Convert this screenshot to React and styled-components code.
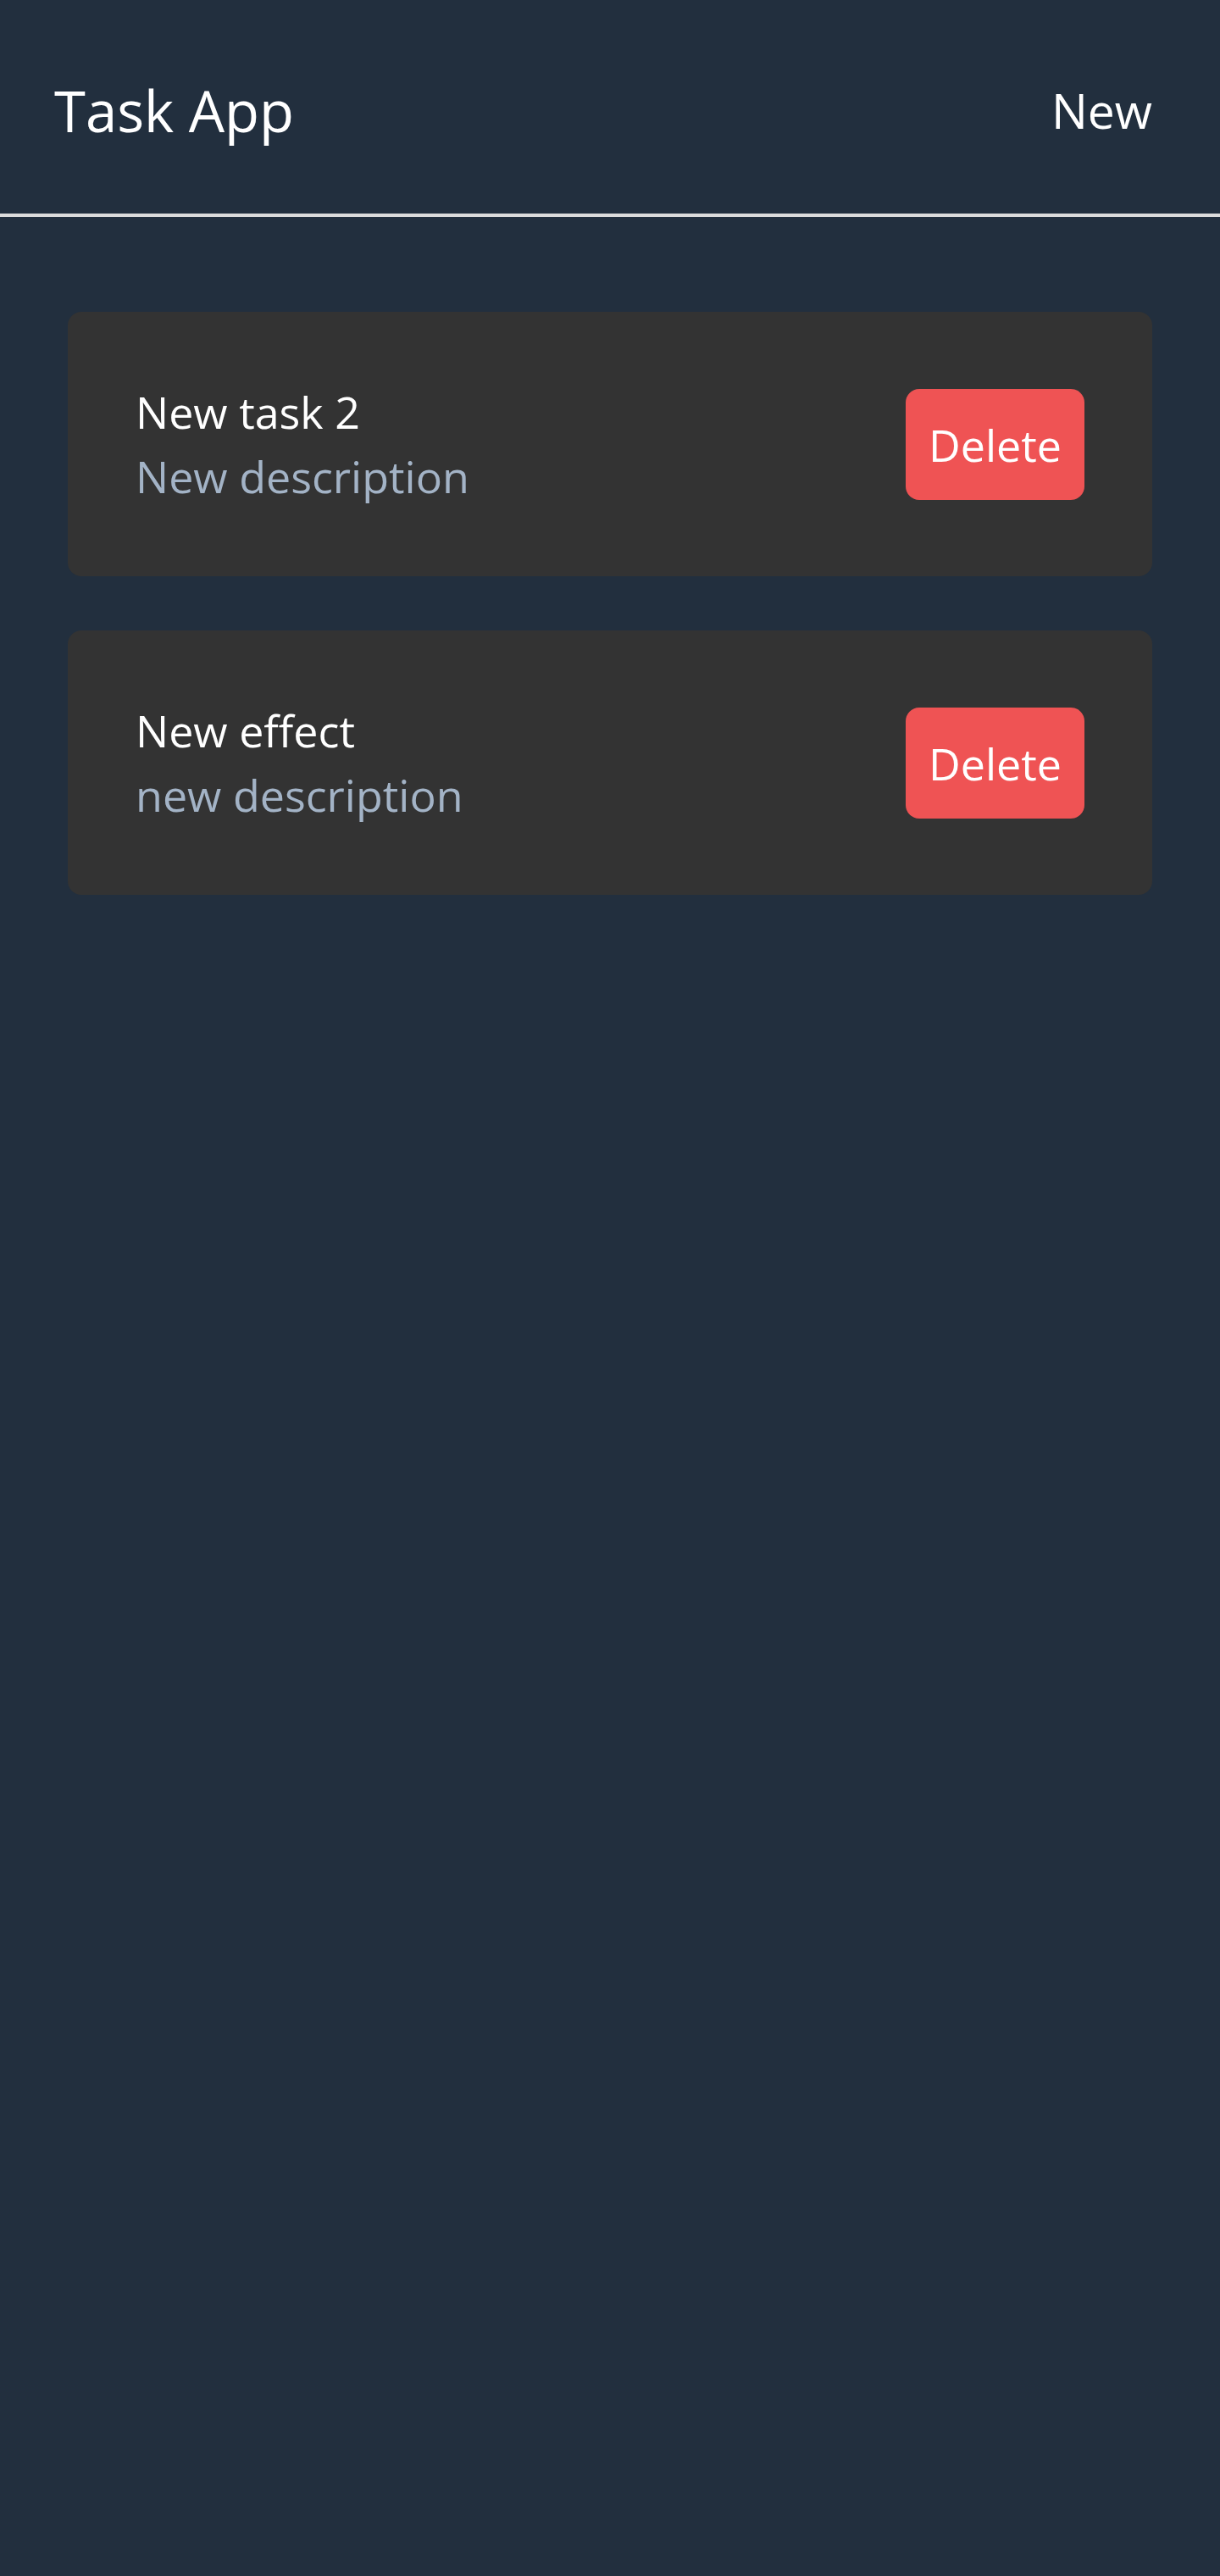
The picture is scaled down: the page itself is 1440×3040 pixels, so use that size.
import React from 'react';
import { useState } from 'react';
import styled, { createGlobalStyle } from 'styled-components';

//estilos globales de la pagina
const GlobalStyle = createGlobalStyle`
  body {
    margin: 0;
    background-color: #222f3e;
    font-family: "Open Sans", "Noto Sans", "DejaVu Sans", sans-serif;
    color: #fff;
  }
`;

//estilos para la barra de arriba
const Navbar = styled.header`
  display: flex;
  justify-content: space-between;
  align-items: center;
  height: 256px;
  box-sizing: border-box;
  padding: 8px 80px 0 64px;
  border-bottom: 4px solid #dcdcdc;
`;

const Titulo = styled.h1`
  margin: 0;
  font-size: 67px;
  font-weight: 400;
  line-height: 1;
  color: #fff;
`;

const NuevoLink = styled.a`
  font-size: 57px;
  line-height: 1;
  color: #fff;
  text-decoration: none;
  cursor: pointer;
`;

//contenedor de la lista de tareas
const Lista = styled.main`
  display: flex;
  flex-direction: column;
  gap: 64px;
  padding: 112px 80px;
`;

const Tarjeta = styled.div`
  display: flex;
  justify-content: space-between;
  align-items: center;
  height: 312px;
  box-sizing: border-box;
  padding: 0 80px;
  border-radius: 16px;
  background-color: #333333;
`;

const Info = styled.div`
  display: flex;
  flex-direction: column;
`;

const TareaTitulo = styled.h2`
  margin: 0;
  font-size: 52px;
  font-weight: 400;
  line-height: 76px;
  color: #fff;
`;

const TareaDescripcion = styled.p`
  margin: 0;
  font-size: 52px;
  line-height: 76px;
  color: #a3b3c6;
`;

const BotonBorrar = styled.button`
  border: none;
  border-radius: 16px;
  padding: 27px 27px;
  font-family: inherit;
  font-size: 52px;
  line-height: 77px;
  color: #fff;
  background-color: #ef5354;
  cursor: pointer;
`;

function App() {
  const [tareas, setTareas] = useState([
    { id: 1, title: 'New task 2', description: 'New description' },
    { id: 2, title: 'New effect', description: 'new description' },
  ]);

  const borrarTarea = (id) => {
    setTareas(tareas.filter((t) => t.id !== id));
  };

  return (
    <>
      <GlobalStyle />
      <Navbar>
        <Titulo>Task App</Titulo>
        <NuevoLink>New</NuevoLink>
      </Navbar>
      <Lista>
        {tareas.map((tarea) => (
          <Tarjeta key={tarea.id}>
            <Info>
              <TareaTitulo>{tarea.title}</TareaTitulo>
              <TareaDescripcion>{tarea.description}</TareaDescripcion>
            </Info>
            <BotonBorrar onClick={() => borrarTarea(tarea.id)}>Delete</BotonBorrar>
          </Tarjeta>
        ))}
      </Lista>
    </>
  );
}

export default App;
